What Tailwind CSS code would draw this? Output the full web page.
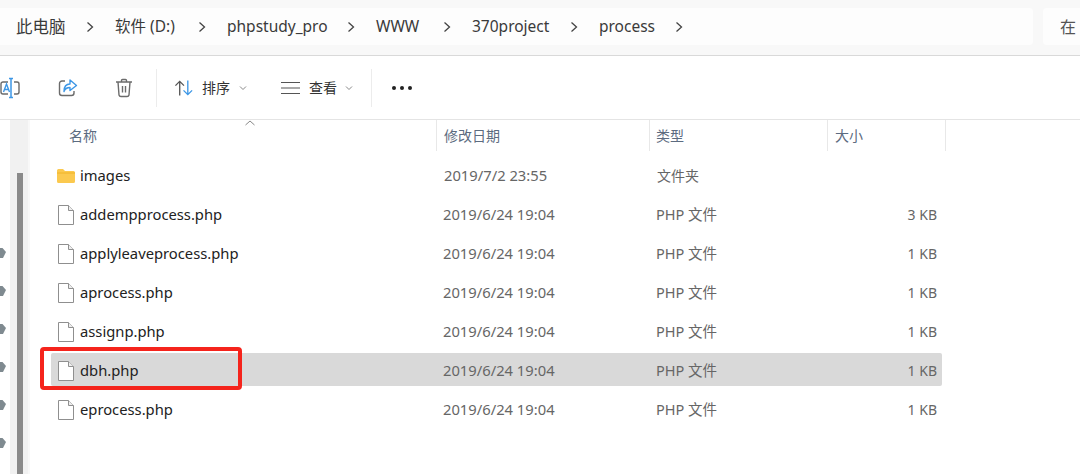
<!DOCTYPE html>
<html lang="en">
<head>
  <meta charset="UTF-8" />
  <title>process</title>
  <script src="https://cdn.jsdelivr.net/npm/@tailwindcss/browser@4"></script>
</head>
<body class="bg-white h-[474px] w-[1080px] overflow-hidden font-['Noto_Sans','Noto_Sans_CJK_SC',sans-serif] text-[#2b2b2b]">
  <!-- address bar -->
  <div class="h-[56px] bg-[#f8f8f8] border-b border-[#d9d9d9] flex pt-2 gap-[10px]">
    <div class="w-[1033px] h-[37px] bg-[#fdfdfd] rounded-r flex items-center pl-4 pt-[1px] text-[15.5px] text-[#3a3a3a]">
      <span class="w-[69px] text-[16.5px]">此电脑</span>
      <svg class="w-[10px] h-[12px] mr-[20px]" viewBox="0 0 10 12" fill="none" stroke="#444" stroke-width="1.3"><path d="M2.5 1.5 7.5 6l-5 4.5"/></svg>
      <span class="w-[82px]">软件 (D:)</span>
      <svg class="w-[10px] h-[12px] mr-[20px]" viewBox="0 0 10 12" fill="none" stroke="#444" stroke-width="1.3"><path d="M2.5 1.5 7.5 6l-5 4.5"/></svg>
      <span class="w-[119px]">phpstudy_pro</span>
      <svg class="w-[10px] h-[12px] mr-[20px]" viewBox="0 0 10 12" fill="none" stroke="#444" stroke-width="1.3"><path d="M2.5 1.5 7.5 6l-5 4.5"/></svg>
      <span class="w-[66px]">WWW</span>
      <svg class="w-[10px] h-[12px] mr-[20px]" viewBox="0 0 10 12" fill="none" stroke="#444" stroke-width="1.3"><path d="M2.5 1.5 7.5 6l-5 4.5"/></svg>
      <span class="w-[97px]">370project</span>
      <svg class="w-[10px] h-[12px] mr-[20px]" viewBox="0 0 10 12" fill="none" stroke="#444" stroke-width="1.3"><path d="M2.5 1.5 7.5 6l-5 4.5"/></svg>
      <span class="w-[75px]">process</span>
      <svg class="w-[10px] h-[12px]" viewBox="0 0 10 12" fill="none" stroke="#444" stroke-width="1.3"><path d="M2.5 1.5 7.5 6l-5 4.5"/></svg>
    </div>
    <div class="flex-1 h-[37px] bg-[#fdfdfd] rounded-l flex items-center pl-[17px] text-[16px] text-[#555]">在</div>
  </div>

  <!-- toolbar -->
  <div class="h-[64px] border-b border-[#e4e4e4] flex items-center">
    <svg class="w-[20px] h-[22px]" viewBox="0 0 20 22" fill="none">
      <path d="M8 5H3a2 2 0 0 0-2 2v8a2 2 0 0 0 2 2h5M14 5h3a2 2 0 0 1 2 2v8a2 2 0 0 1-2 2h-3" stroke="#6b6b6b" stroke-width="1.4"/>
      <path d="M9 1.500h4M9 20.500h4M11 1.500v19" stroke="#3d97e6" stroke-width="1.500"/>
      <path d="M3.500 15 6.500 7l3 8M4.600 12.500h3.800" stroke="#3d97e6" stroke-width="1.400"/>
    </svg>
    <svg class="w-[20px] h-[20px] ml-[38px]" viewBox="0 0 20 20" fill="none">
      <path d="M7 3H4a2.500 2.500 0 0 0-2.500 2.500V15A2.500 2.500 0 0 0 4 17.500h9.500a2.500 2.500 0 0 0 2.500-2.500v-2" stroke="#6b6b6b" stroke-width="1.400"/>
      <path d="M12 2l6.500 5.500L12 12.500V9.500c-3 0-5 1-6 4 0-5 2.500-7.500 6-7.500z" stroke="#3d97e6" stroke-width="1.400" stroke-linejoin="round"/>
    </svg>
    <svg class="w-[18px] h-[20px] ml-[37px]" viewBox="0 0 18 20" fill="none" stroke="#6b6b6b" stroke-width="1.400">
      <path d="M1 4h16M6.500 4V2.500A1 1 0 0 1 7.500 1.500h3a1 1 0 0 1 1 1V4M3 4l1 13a2 2 0 0 0 2 1.500h6a2 2 0 0 0 2-1.500l1-13M7.500 8v6.500M10.500 8v6.500"/>
    </svg>
    <div class="w-px h-[38px] bg-[#ececec] ml-[23px]"></div>
    <svg class="w-[20px] h-[18px] ml-[17px]" viewBox="0 0 21 18" fill="none" stroke-width="1.400">
      <path d="M6 17V2M1.500 6.500 6 2l4.500 4.500" stroke="#555"/>
      <path d="M14.500 1v15M10 11.500l4.500 4.500 4.500-4.500" stroke="#3d97e6"/>
    </svg>
    <span class="text-[14px] ml-[8px] w-[29px] text-[#333]">排序</span>
    <svg class="w-[8px] h-[6px] ml-[8px]" viewBox="0 0 8 6" fill="none" stroke="#888"><path d="M1 1.500 4 4.500l3-3"/></svg>
    <svg class="w-[19px] h-[14px] ml-[34px]" viewBox="0 0 19 14" fill="none" stroke="#555" stroke-width="1.200"><path d="M0 1.500h19M0 7h19M0 12.500h19"/></svg>
    <span class="text-[14px] ml-[9px] w-[29px] text-[#333]">查看</span>
    <svg class="w-[8px] h-[6px] ml-[7px]" viewBox="0 0 8 6" fill="none" stroke="#888"><path d="M1 1.500 4 4.500l3-3"/></svg>
    <div class="w-px h-[38px] bg-[#ececec] ml-[18px]"></div>
    <div class="flex gap-[4px] ml-[20px]">
      <span class="w-[4px] h-[4px] bg-[#222] rounded-full"></span>
      <span class="w-[4px] h-[4px] bg-[#222] rounded-full"></span>
      <span class="w-[4px] h-[4px] bg-[#222] rounded-full"></span>
    </div>
  </div>

  <div class="flex h-[354px]">
    <!-- nav pane edge and scrollbar -->
    <div class="w-[10px] relative">
      <div class="absolute left-0 top-[128px] flex flex-col gap-[28px]">
        <svg class="w-[6px] h-[10px]" viewBox="0 0 6 10" fill="#7f8a90"><path d="M0 0h2.500L6 4 3 10H0z"/></svg>
        <svg class="w-[6px] h-[10px]" viewBox="0 0 6 10" fill="#7f8a90"><path d="M0 0h2.500L6 4 3 10H0z"/></svg>
        <svg class="w-[6px] h-[10px]" viewBox="0 0 6 10" fill="#7f8a90"><path d="M0 0h2.500L6 4 3 10H0z"/></svg>
        <svg class="w-[6px] h-[10px]" viewBox="0 0 6 10" fill="#7f8a90"><path d="M0 0h2.500L6 4 3 10H0z"/></svg>
        <svg class="w-[6px] h-[10px]" viewBox="0 0 6 10" fill="#7f8a90"><path d="M0 0h2.500L6 4 3 10H0z"/></svg>
        <svg class="w-[6px] h-[10px]" viewBox="0 0 6 10" fill="#7f8a90"><path d="M0 0h2.500L6 4 3 10H0z"/></svg>
      </div>
    </div>
    <div class="w-[20px] bg-[#f1f1f1] pl-[7px] pt-[53px] border-r-[2px] border-[#f8f8f8]">
      <div class="w-[6px] h-full bg-[#8a8a8a]"></div>
    </div>

    <!-- file list -->
    <div class="flex-1 relative">
      <div class="absolute left-[215px] top-0">
        <svg class="w-[10px] h-[6px]" viewBox="0 0 10 6" fill="none" stroke="#888"><path d="M.5 5 5 1l4.500 4"/></svg>
      </div>
      <div class="h-[31px] flex text-[14px] text-[#5c6b80]">
        <div class="w-[407px] pl-[39px] flex items-center border-r border-[#e8e8e8]">名称</div>
        <div class="w-[213px] pl-[7px] flex items-center border-r border-[#e8e8e8]">修改日期</div>
        <div class="w-[178px] pl-[6px] flex items-center border-r border-[#e8e8e8]">类型</div>
        <div class="w-[118px] pl-[7px] flex items-center border-r border-[#e8e8e8]">大小</div>
      </div>

      <div class="mt-[7px] ml-[21px] w-[891px] flex flex-col gap-[6px] text-[14.75px]">
        <div class="h-[33px] pt-[2px] flex items-center">
          <svg class="w-[18px] h-[14px] ml-[6px]" viewBox="0 0 18 14"><path d="M0 1.500A1.500 1.500 0 0 1 1.500 0h4.500l2 2h8.500A1.500 1.500 0 0 1 18 3.500V12.500A1.500 1.500 0 0 1 16.500 14h-15A1.500 1.500 0 0 1 0 12.500z" fill="#fbc94f"/><path d="M0 4h18" stroke="#f0b429"/></svg>
          <span class="ml-[5px] w-[364px] text-[#222]">images</span>
          <span class="w-[213px] text-[#666]">2019/7/2 23:55</span>
          <span class="w-[178px] text-[14px] text-[#666]">文件夹</span>
        </div>
        <div class="h-[33px] pt-[2px] flex items-center">
          <svg class="w-[16px] h-[20px] ml-[7px]" viewBox="0 0 16 20" fill="#fff" stroke="#8f8f8f"><path d="M.5.500h10l5 5v14H.500z"/><path d="M10.500.500v5h5" fill="#eee"/></svg>
          <span class="ml-[6px] w-[363px] text-[#222]">addempprocess.php</span>
          <span class="w-[213px] text-[#666]">2019/6/24 19:04</span>
          <span class="w-[178px] text-[14.5px] text-[#666]">PHP 文件</span>
          <span class="w-[103px] text-[14px] text-right text-[#666]">3 KB</span>
        </div>
        <div class="h-[33px] pt-[2px] flex items-center">
          <svg class="w-[16px] h-[20px] ml-[7px]" viewBox="0 0 16 20" fill="#fff" stroke="#8f8f8f"><path d="M.5.500h10l5 5v14H.500z"/><path d="M10.500.500v5h5" fill="#eee"/></svg>
          <span class="ml-[6px] w-[363px] text-[#222]">applyleaveprocess.php</span>
          <span class="w-[213px] text-[#666]">2019/6/24 19:04</span>
          <span class="w-[178px] text-[14.5px] text-[#666]">PHP 文件</span>
          <span class="w-[103px] text-[14px] text-right text-[#666]">1 KB</span>
        </div>
        <div class="h-[33px] pt-[2px] flex items-center">
          <svg class="w-[16px] h-[20px] ml-[7px]" viewBox="0 0 16 20" fill="#fff" stroke="#8f8f8f"><path d="M.5.500h10l5 5v14H.500z"/><path d="M10.500.500v5h5" fill="#eee"/></svg>
          <span class="ml-[6px] w-[363px] text-[#222]">aprocess.php</span>
          <span class="w-[213px] text-[#666]">2019/6/24 19:04</span>
          <span class="w-[178px] text-[14.5px] text-[#666]">PHP 文件</span>
          <span class="w-[103px] text-[14px] text-right text-[#666]">1 KB</span>
        </div>
        <div class="h-[33px] pt-[2px] flex items-center">
          <svg class="w-[16px] h-[20px] ml-[7px]" viewBox="0 0 16 20" fill="#fff" stroke="#8f8f8f"><path d="M.5.500h10l5 5v14H.500z"/><path d="M10.500.500v5h5" fill="#eee"/></svg>
          <span class="ml-[6px] w-[363px] text-[#222]">assignp.php</span>
          <span class="w-[213px] text-[#666]">2019/6/24 19:04</span>
          <span class="w-[178px] text-[14.5px] text-[#666]">PHP 文件</span>
          <span class="w-[103px] text-[14px] text-right text-[#666]">1 KB</span>
        </div>
        <div class="h-[33px] pt-[2px] flex items-center bg-[#d9d9d9] rounded-[2px] relative">
          <svg class="w-[16px] h-[20px] ml-[7px]" viewBox="0 0 16 20" fill="#fff" stroke="#8f8f8f"><path d="M.5.500h10l5 5v14H.500z"/><path d="M10.500.500v5h5" fill="#eee"/></svg>
          <span class="ml-[6px] w-[363px] text-[#222]">dbh.php</span>
          <span class="w-[213px] text-[#666]">2019/6/24 19:04</span>
          <span class="w-[178px] text-[14.5px] text-[#666]">PHP 文件</span>
          <span class="w-[103px] text-[14px] text-right text-[#666]">1 KB</span>
          <div class="absolute left-[-11px] top-[-6px] w-[202px] h-[43px] border-[4px] border-[#f5241c] rounded-[4px]"></div>
        </div>
        <div class="h-[33px] pt-[2px] flex items-center">
          <svg class="w-[16px] h-[20px] ml-[7px]" viewBox="0 0 16 20" fill="#fff" stroke="#8f8f8f"><path d="M.5.500h10l5 5v14H.500z"/><path d="M10.500.500v5h5" fill="#eee"/></svg>
          <span class="ml-[6px] w-[363px] text-[#222]">eprocess.php</span>
          <span class="w-[213px] text-[#666]">2019/6/24 19:04</span>
          <span class="w-[178px] text-[14.5px] text-[#666]">PHP 文件</span>
          <span class="w-[103px] text-[14px] text-right text-[#666]">1 KB</span>
        </div>
      </div>
    </div>
  </div>
</body>
</html>
